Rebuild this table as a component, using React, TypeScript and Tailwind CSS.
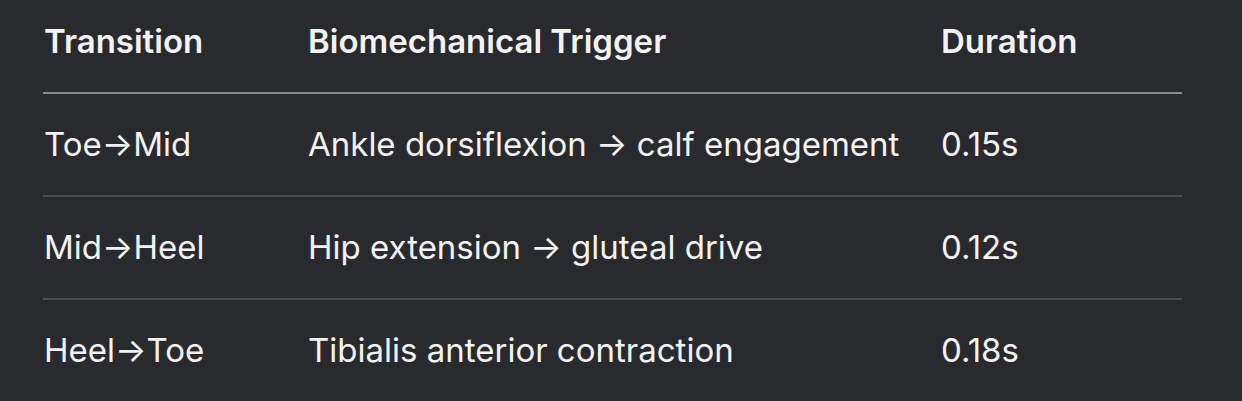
const rows = [
  { transition: 'Toe→Mid', trigger: 'Ankle dorsiflexion → calf engagement', duration: '0.15s' },
  { transition: 'Mid→Heel', trigger: 'Hip extension → gluteal drive', duration: '0.12s' },
  { transition: 'Heel→Toe', trigger: 'Tibialis anterior contraction', duration: '0.18s' },
]

export default function App() {
  return (
    <div className="min-h-[401px] w-[1242px] bg-[#292a2e] pl-[43px] font-['Inter',sans-serif] text-[33px] text-[#f2f2f2]">
      <table className="w-[1139px] table-fixed border-collapse text-left">
        <colgroup>
          <col className="w-[265px]" />
          <col className="w-[633px]" />
          <col />
        </colgroup>
        {/* Header */}
        <thead>
          <tr className="border-b-2 border-[#8a8a8c]">
            <th className="h-[93px] pb-[8px] pl-px align-middle font-semibold">Transition</th>
            <th className="h-[93px] pb-[8px] align-middle font-semibold">Biomechanical Trigger</th>
            <th className="h-[93px] pb-[8px] align-middle font-semibold">Duration</th>
          </tr>
        </thead>
        {/* Rows */}
        <tbody>
          {rows.map((row, i) => (
            <tr key={row.transition} className={i < rows.length - 1 ? 'border-b-2 border-[#4b4c4f]' : ''}>
              <td className="h-[103px] pl-px align-middle">{row.transition}</td>
              <td className="h-[103px] align-middle">{row.trigger}</td>
              <td className="h-[103px] align-middle">{row.duration}</td>
            </tr>
          ))}
        </tbody>
      </table>
    </div>
  )
}
